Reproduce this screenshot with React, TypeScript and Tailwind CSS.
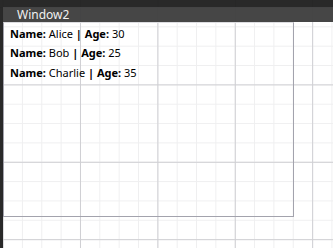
import React from 'react';

const people = [
  { name: 'Alice', age: 30 },
  { name: 'Bob', age: 25 },
  { name: 'Charlie', age: 35 },
];

export default function App() {
  return (
    <div
      className="relative w-[333px] h-[248px] overflow-hidden bg-white bg-[linear-gradient(to_right,#cfcfd3_1px,transparent_1px),linear-gradient(to_bottom,#cfcfd3_1px,transparent_1px),linear-gradient(to_right,#efeff0_1px,transparent_1px),linear-gradient(to_bottom,#efeff0_1px,transparent_1px)] bg-[size:77.4px_77.4px,77.4px_77.4px,19.35px_19.35px,19.35px_19.35px] bg-[position:2.6px_7px] flex flex-col font-['Noto_Sans',sans-serif]"
    >
      {/* Top strip */}
      <div className="h-[7px] shrink-0 bg-[rgba(30,30,30,0.95)]" />

      <div className="flex flex-1">
        {/* Left strip */}
        <div className="w-[3px] shrink-0 bg-[rgba(30,30,30,0.95)]" />

        <div className="flex flex-col flex-1">
          {/* Title bar */}
          <div className="h-[15px] shrink-0 bg-[rgba(62,62,62,0.96)] flex items-center pl-[14px]">
            <span className="text-[12px] leading-none text-[#f1f1f1]">Window2</span>
          </div>

          {/* Window body */}
          <div className="w-[291px] h-[195px] border-t border-t-[#dcdce0] border-l border-r border-b border-[#a3a3ad] pt-[1px] pl-[6px]">
            {people.map((p) => (
              <div key={p.name} className="h-[19.5px] flex items-center text-[11px] text-black whitespace-pre">
                <span className="font-bold">Name: </span>
                <span>{p.name} </span>
                <span className="font-bold">| Age: </span>
                <span>{p.age}</span>
              </div>
            ))}
          </div>
        </div>
      </div>
    </div>
  );
}
